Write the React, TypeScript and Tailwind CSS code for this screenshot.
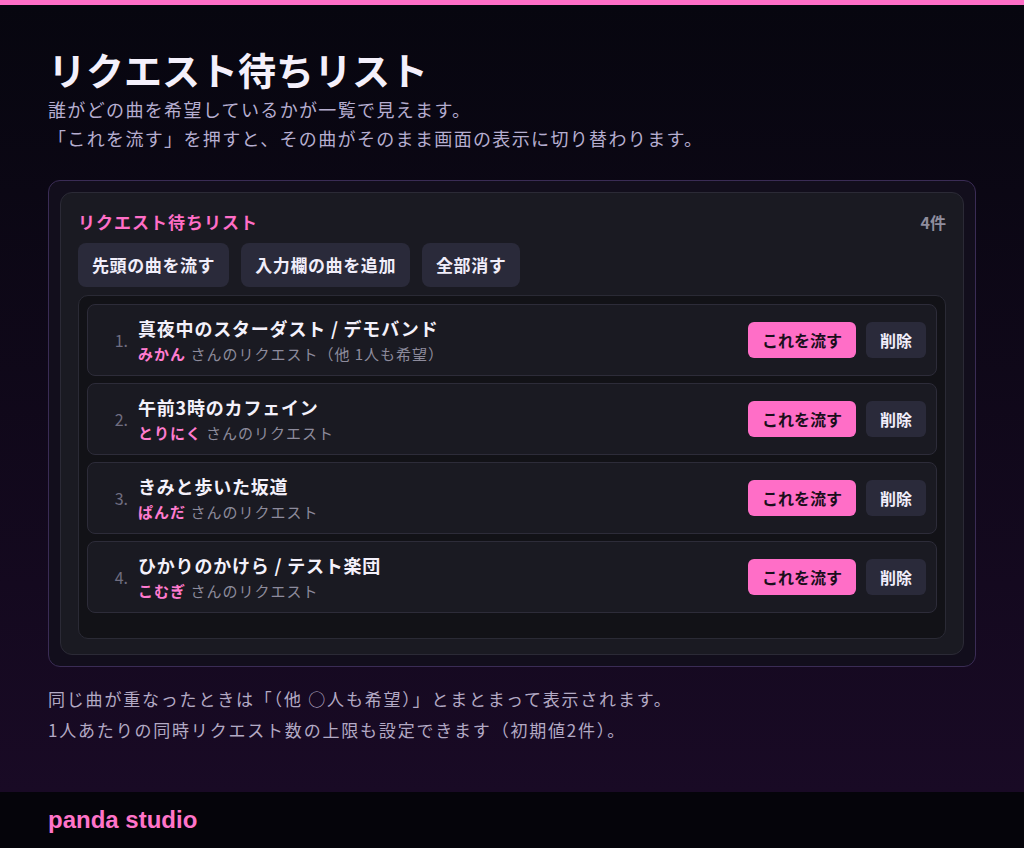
import React from 'react';

interface RequestItem {
  title: string;
  requester: string;
  extra?: string;
}

const requests: RequestItem[] = [
  { title: '真夜中のスターダスト / デモバンド', requester: 'みかん', extra: '（他 1人も希望）' },
  { title: '午前3時のカフェイン', requester: 'とりにく' },
  { title: 'きみと歩いた坂道', requester: 'ぱんだ' },
  { title: 'ひかりのかけら / テスト楽団', requester: 'こむぎ' },
];

const jp = { fontFamily: '"Noto Sans CJK JP", "Noto Sans", sans-serif' };

const QueueRow: React.FC<RequestItem & { index: number }> = ({ index, title, requester, extra }) => (
  <div className="flex h-[72px] items-center rounded-lg border border-[#2d2c39] bg-[#1a1a22] pl-[10px] pr-[10px]">
    <div className="w-[30px] text-right text-[16px] text-[#6f6d80]">{index}.</div>
    <div className="ml-[10px] flex min-w-0 flex-1 flex-col">
      <div className="text-[18px] font-bold leading-[24px] tracking-[0.8px] text-[#f4f1fb]">{title}</div>
      <div className="mt-[3px] text-[15px] leading-[22px] tracking-[1px] text-[#8d8b9c]">
        <span className="font-bold text-[#ff7ccf]">{requester}</span> さんのリクエスト{extra}
      </div>
    </div>
    <div className="flex items-center gap-[10px]">
      <button className="h-9 rounded-md bg-[#ff6ec7] px-[14px] text-[16px] font-bold text-[#1a0f1c]">
        これを流す
      </button>
      <button className="h-9 rounded-md bg-[#2a2a3a] px-[14px] text-[16px] font-bold text-[#f1eefa]">
        削除
      </button>
    </div>
  </div>
);

const ToolbarButton: React.FC<{ label: string }> = ({ label }) => (
  <button className="h-11 rounded-lg bg-[#2a2a3a] px-[14px] text-[17px] font-bold tracking-[0.6px] text-[#f1eefa]">
    {label}
  </button>
);

export default function App() {
  return (
    <div className="flex min-h-[848px] flex-col" style={jp}>
      <div className="h-[5px] bg-[#ff6ec7]" />
      <main className="flex-1 bg-gradient-to-b from-[#07060f] to-[#190a25] px-12 pt-10">
        <h1 className="text-[38px] font-bold leading-[48px] text-[#f4f0fb]">リクエスト待ちリスト</h1>
        <div className="mt-[2px] text-[18px] leading-[29px] tracking-[1.35px] text-[#b6aed0]">
          <p>誰がどの曲を希望しているかが一覧で見えます。</p>
          <p>「これを流す」を押すと、その曲がそのまま画面の表示に切り替わります。</p>
        </div>

        <section className="mt-[27px] rounded-xl border border-[#3a2c55] bg-[#120e1c] p-[11px]">
          <div className="rounded-xl border border-[#2b2a36] bg-[#1a1a22] p-[17px] pb-[15px]">
            <div className="flex items-center justify-between">
              <h2 className="text-[17px] font-bold leading-[24px] tracking-[1px] text-[#ff6ec7]">リクエスト待ちリスト</h2>
              <span className="text-[16px] font-bold text-[#8f8d9e]">4件</span>
            </div>
            <div className="mt-[9px] flex gap-3">
              <ToolbarButton label="先頭の曲を流す" />
              <ToolbarButton label="入力欄の曲を追加" />
              <ToolbarButton label="全部消す" />
            </div>
            <div className="mt-2 flex flex-col gap-[7px] rounded-[10px] border border-[#2a2a35] bg-[#121217] p-2 pb-[25px]">
              {requests.map((r, i) => (
                <QueueRow key={i} index={i + 1} {...r} />
              ))}
            </div>
          </div>
        </section>

        <div className="mt-4 text-[17px] leading-[31px] tracking-[1.8px] text-[#b3a9c4]">
          <p>同じ曲が重なったときは「（他 ○人も希望）」とまとまって表示されます。</p>
          <p>1人あたりの同時リクエスト数の上限も設定できます（初期値2件）。</p>
        </div>
      </main>
      <footer className="flex h-14 items-center bg-[#05040a] px-12">
        <span className="text-[24px] font-bold text-[#ff74c9]" style={{ fontFamily: '"Liberation Sans", sans-serif' }}>
          panda studio
        </span>
      </footer>
    </div>
  );
}
